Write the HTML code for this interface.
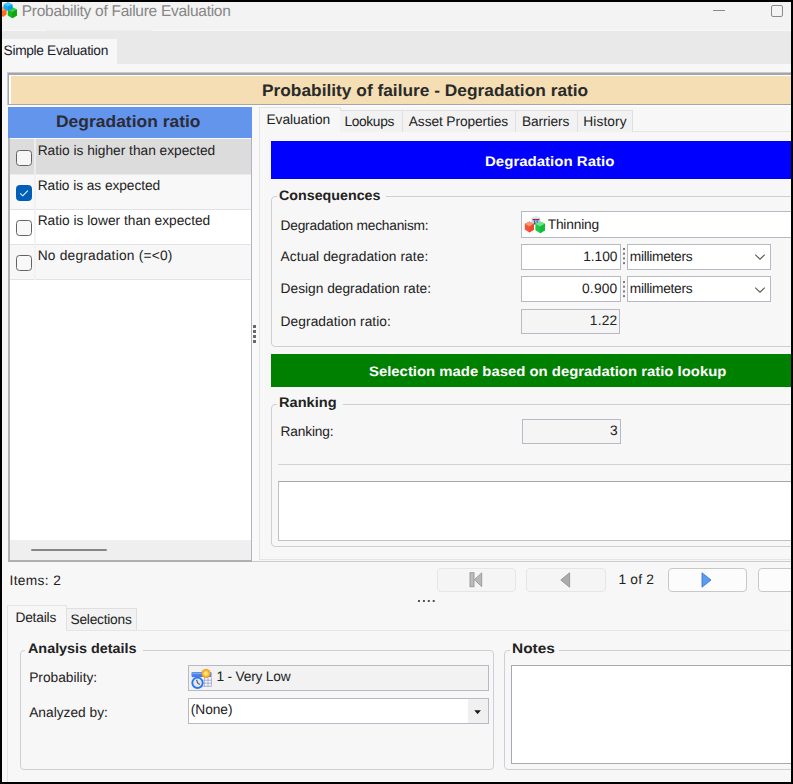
<!DOCTYPE html>
<html>
<head>
<meta charset="utf-8">
<title>Probability of Failure Evaluation</title>
<style>
html,body{margin:0;padding:0;}
body{width:793px;height:784px;background:#000;overflow:hidden;position:relative;font-family:"Liberation Sans",sans-serif;font-size:13.75px;color:#222;text-rendering:geometricPrecision;}
#win{position:absolute;left:2px;top:2px;width:789px;height:780px;background:#f7f7f7;overflow:hidden;}
#c{position:absolute;left:-2px;top:-2px;width:793px;height:784px;}
.a{position:absolute;}
.t{position:absolute;white-space:nowrap;line-height:20px;height:20px;transform-origin:0 50%;}
.box{position:absolute;box-sizing:border-box;border:1px solid #b9b9c3;background:#fff;}
.ro{background:#f5f5f5;}
.grp{position:absolute;box-sizing:border-box;border:1px solid #ccd0d6;border-radius:4px;}
.gl{position:absolute;background:#f7f7f7;height:4px;}
.tab{position:absolute;box-sizing:border-box;border:1px solid #e0e0e0;border-bottom:none;background:#f2f2f2;}
.tabsel{background:#f7f7f7;border-color:#e4e4e4;}
.btn{position:absolute;box-sizing:border-box;border:1px solid #e6e6e6;border-radius:4px;background:#f5f5f5;}
.cb{position:absolute;width:16px;height:16px;box-sizing:border-box;border:1px solid #626262;border-radius:3.5px;background:#f8f8f8;}
</style>
</head>
<body>
<div id="win"><div id="c">

<!-- title bar -->
<div class="a" style="left:2px;top:2px;width:789px;height:28px;background:#f3f3f3;"></div>
<svg class="a" style="left:2px;top:2px;" width="18" height="18" viewBox="2 2 18 18">
  <path d="M3 6.6 L6.6 8.6 L6.6 14.6 L3 16.9 L-1 14.6 L-1 8.6 Z" fill="#ff6a1a"/>
  <path d="M3 6.6 L6.6 8.6 L3 11 L-1 8.6 Z" fill="#ffa468"/>
  <path d="M12.3 7.2 L16.9 9.6 L16.9 15.6 L12.3 18.2 L7.8 15.6 L7.8 9.6 Z" fill="#12b81a"/>
  <path d="M12.3 7.2 L16.9 9.6 L12.3 12.2 L7.8 9.6 Z" fill="#34d63a"/>
  <path d="M12.3 12.2 L16.9 9.6 L16.9 15.6 L12.3 18.2 Z" fill="#0ea414"/>
  <path d="M8 2.3 L12.4 4.4 L12.4 8.8 L8 10.9 L3.6 8.8 L3.6 4.4 Z" fill="#10a8f8"/>
  <path d="M8 2.3 L12.4 4.4 L8 6.6 L3.6 4.4 Z" fill="#48c8ff"/>
  <path d="M8 6.6 L12.4 4.4 L12.4 8.8 L8 10.9 Z" fill="#0c98ea"/>
</svg>
<div class="a" style="left:713px;top:10px;width:12px;height:1px;background:#8a8a8a;"></div>
<div class="a" style="left:771px;top:5px;width:12px;height:12px;box-sizing:border-box;border:1px solid #8a8a8a;border-radius:2px;"></div>

<!-- ribbon band -->
<div class="a" style="left:2px;top:30.5px;width:789px;height:33.5px;background:#e9e9e9;"></div>
<div class="a" style="left:46px;top:29.5px;width:106px;height:1.5px;background:rgba(0,0,0,0.035);"></div>
<div class="a" style="left:2px;top:38.5px;width:115px;height:26px;background:#f7f7f7;"></div>

<!-- wheat header -->
<div class="a" style="left:7px;top:72px;width:800px;height:33px;box-sizing:border-box;background:#f5deb3;border-top:3px solid #a6a6aa;border-left:3px solid #a6a6aa;border-bottom:1px solid #a6a6aa;"></div>
<div class="a" style="left:7px;top:72px;width:800px;height:1px;background:#c8c8cc;"></div>
<div class="a" style="left:7px;top:72px;width:1px;height:33px;background:#c8c8cc;"></div>
<div class="a" style="left:9px;top:75px;width:800px;height:1px;background:#fff;"></div>
<div class="a" style="left:9px;top:75px;width:2px;height:29px;background:#fff;"></div>
<div class="a" style="left:8px;top:105px;width:800px;height:2px;background:#fbfbfb;"></div>

<!-- left list -->
<div class="a" style="left:7.5px;top:107px;width:244.5px;height:454px;background:#fff;border-left:2px solid #b4b4b8;border-right:1px solid #b0b4bc;box-sizing:border-box;"></div>
<div class="a" style="left:7.5px;top:138px;width:2px;height:422px;background:#b4b4b8;z-index:2;"></div>
<div class="a" style="left:8px;top:107px;width:244px;height:30.5px;background:#6495ed;"></div>
<div class="a" style="left:9px;top:137.5px;width:242px;height:1.5px;background:#fafafa;"></div>

<div class="a" style="left:9px;top:139px;width:242px;height:35px;background:#dcdcdc;"></div>
<div class="a" style="left:9px;top:174px;width:242px;height:36px;background:#f8f8f8;border-top:1px solid #ececec;border-bottom:1px solid #e2e2e2;box-sizing:border-box;"></div>
<div class="a" style="left:9px;top:210px;width:242px;height:35px;background:#fff;border-bottom:1px solid #e2e2e2;box-sizing:border-box;"></div>
<div class="a" style="left:9px;top:245px;width:242px;height:35px;background:#f7f7f7;border-bottom:1px solid #e2e2e2;box-sizing:border-box;"></div>
<div class="a" style="left:34px;top:139px;width:2px;height:141px;background:rgba(240,240,240,0.8);"></div>

<div class="cb" style="left:16px;top:150px;background:#f6f6f6;"></div>
<div class="cb" style="left:16px;top:185px;border-color:#005bb2;background:#005fb8;"></div>
<svg class="a" style="left:16px;top:185px;" width="16" height="16" viewBox="0 0 16 16"><path d="M4.2 8.4 L6.8 10.8 L11.8 5.6" fill="none" stroke="#f4f8ff" stroke-width="1.05"/></svg>
<div class="cb" style="left:16px;top:220px;"></div>
<div class="cb" style="left:16px;top:255px;"></div>

<!-- list h-scrollbar -->
<div class="a" style="left:9px;top:540px;width:242px;height:20px;background:#efefef;"></div>
<div class="a" style="left:31px;top:548.6px;width:76px;height:2.4px;background:#868686;border-radius:1px;"></div>
<div class="a" style="left:7.5px;top:559.5px;width:244.5px;height:2px;background:#b0b0b4;"></div>
<div class="a" style="left:252px;top:560.7px;width:600px;height:1.3px;background:#cbcbcf;"></div>

<!-- splitter -->
<div class="a" style="left:252px;top:107px;width:7px;height:453px;background:#f9f9f9;"></div>
<div class="a" style="left:253.2px;top:325px;width:2.6px;height:2.6px;background:#686868;box-shadow:0 5px 0 #686868,0 10px 0 #686868,0 15px 0 #686868;"></div>

<!-- right tabs -->
<div class="a" style="left:259px;top:131px;width:600px;height:429px;box-sizing:border-box;border:1px solid #e4e4e4;background:#f7f7f7;"></div>
<div class="tab tabsel" style="left:259px;top:107px;width:81.5px;height:25px;"></div>
<div class="tab" style="left:340px;top:109.5px;width:63px;height:22px;border-left:none;"></div>
<div class="tab" style="left:402px;top:109.5px;width:114px;height:22px;"></div>
<div class="tab" style="left:515px;top:109.5px;width:63px;height:22px;"></div>
<div class="tab" style="left:577px;top:109.5px;width:56px;height:22px;"></div>

<!-- blue bar -->
<div class="a" style="left:271px;top:141px;width:560px;height:37.5px;background:#0000ff;"></div>

<!-- Consequences group -->
<div class="grp" style="left:271px;top:196px;width:600px;height:151px;"></div>
<div class="gl" style="left:277px;top:194px;width:109px;"></div>

<div class="box" style="left:521px;top:211px;width:300px;height:27px;"></div>
<svg class="a" style="left:524px;top:215px;" width="22" height="19" viewBox="0 0 22 19">
  <path d="M12 0.8 L16.2 3 L16.2 8 L12 10.2 L7.6 8 L7.6 3 Z" fill="#a6e4f4"/>
  <path d="M12 0.8 L16.2 3 L12 5 L7.6 3 Z" fill="#d2f4fb"/>
  <path d="M8.6 4.6h6.8" stroke="#c81e2a" stroke-width="1.5"/>
  <path d="M10.6 5.4v4M13.2 5.4v3.4" stroke="#2a3cd8" stroke-width="1.1"/>
  <path d="M10.4 6.5l1.6 2.6" stroke="#e04040" stroke-width="0.9"/>
  <path d="M5.4 6.4 L10 8.8 L10 14.6 L5.4 17.4 L0.8 14.6 L0.8 8.8 Z" fill="#f4553a"/>
  <path d="M5.4 6.4 L10 8.8 L5.4 11.4 L0.8 8.8 Z" fill="#fa9a78"/>
  <path d="M5.4 11.4 L10 8.8 L10 14.6 L5.4 17.4 Z" fill="#f0482c"/>
  <path d="M16.2 6.4 L21 8.8 L21 15.2 L16.2 18.2 L11.4 15.2 L11.4 8.8 Z" fill="#1fc845"/>
  <path d="M16.2 6.4 L21 8.8 L16.2 11.6 L11.4 8.8 Z" fill="#6ae888"/>
  <path d="M16.2 11.6 L21 8.8 L21 15.2 L16.2 18.2 Z" fill="#18b83a"/>
</svg>

<div class="box" style="left:521px;top:244px;width:100px;height:25.5px;"></div>
<div class="box" style="left:627px;top:244px;width:144px;height:25.5px;"></div>
<svg class="a" style="left:754px;top:253px;" width="12" height="8" viewBox="0 0 12 8"><path d="M1.2 1.6 L6 6.2 L10.8 1.6" fill="none" stroke="#5a5a5a" stroke-width="1.1"/></svg>
<div class="box" style="left:521px;top:276px;width:100px;height:26px;"></div>
<div class="box" style="left:627px;top:276px;width:144px;height:26px;"></div>
<svg class="a" style="left:754px;top:285.5px;" width="12" height="8" viewBox="0 0 12 8"><path d="M1.2 1.6 L6 6.2 L10.8 1.6" fill="none" stroke="#5a5a5a" stroke-width="1.1"/></svg>
<div class="box ro" style="left:521px;top:309px;width:99px;height:24.5px;"></div>

<!-- spin dots -->
<div class="a" style="left:623px;top:248px;width:2px;height:2px;background:#7c7c7c;box-shadow:0 4.7px 0 #7c7c7c,0 9.4px 0 #7c7c7c,0 14.1px 0 #7c7c7c;"></div>
<div class="a" style="left:623px;top:280.5px;width:2px;height:2px;background:#7c7c7c;box-shadow:0 4.7px 0 #7c7c7c,0 9.4px 0 #7c7c7c,0 14.1px 0 #7c7c7c;"></div>

<!-- green bar -->
<div class="a" style="left:271px;top:353.8px;width:560px;height:33.5px;background:#008000;"></div>

<!-- Ranking group -->
<div class="grp" style="left:271px;top:404px;width:600px;height:143px;"></div>
<div class="gl" style="left:277px;top:402px;width:66px;"></div>
<div class="box ro" style="left:521.5px;top:419px;width:99.5px;height:24.5px;"></div>
<div class="a" style="left:277.8px;top:463.5px;width:560px;height:1.2px;background:#d0d2d8;"></div>
<div class="box" style="left:277.8px;top:481px;width:560px;height:60px;border-color:#c0c0c8;border-top-color:#a8a8ac;"></div>

<!-- status row -->
<div class="btn" style="left:436.5px;top:567.5px;width:79px;height:24.5px;"></div>
<div class="btn" style="left:526px;top:567.5px;width:79.5px;height:24.5px;"></div>
<div class="btn" style="left:667.5px;top:567.5px;width:79.5px;height:24.5px;background:#fcfcfc;border-color:#c8c8c8;"></div>
<div class="btn" style="left:757.5px;top:567.5px;width:79px;height:24.5px;background:#fcfcfc;border-color:#c8c8c8;"></div>
<svg class="a" style="left:469px;top:572px;" width="15" height="16" viewBox="0 0 15 16"><rect x="1" y="0.7" width="4" height="14" fill="#bcbcbc" stroke="#969696" stroke-width="0.9"/><path d="M12.7 0.9 L5.3 7.7 L12.7 14.5 Z" fill="#b8b8b8" stroke="#969696" stroke-width="0.9"/></svg>
<svg class="a" style="left:560px;top:572px;" width="11" height="16" viewBox="0 0 11 16"><path d="M9.6 0.8 L0.8 8 L9.6 15.2 Z" fill="#ababab" stroke="#8c8c8c" stroke-width="0.8"/></svg>
<svg class="a" style="left:701px;top:572px;" width="11" height="16" viewBox="0 0 11 16"><path d="M1 0.8 L10 8 L1 15.2 Z" fill="#5a9cf2" stroke="#3c78d8" stroke-width="0.9"/></svg>
<div class="a" style="left:417.6px;top:600px;width:2.4px;height:2.4px;background:#555;box-shadow:4.9px 0 0 #555,9.8px 0 0 #555,14.7px 0 0 #555;"></div>

<!-- bottom tabs -->
<div class="a" style="left:7px;top:630px;width:800px;height:160px;box-sizing:border-box;border:1px solid #e6e6e6;background:#f7f7f7;"></div>
<div class="tab tabsel" style="left:7px;top:605px;width:60px;height:26px;"></div>
<div class="tab" style="left:66px;top:608px;width:71px;height:22px;"></div>

<div class="grp" style="left:20px;top:650px;width:474px;height:119.5px;"></div>
<div class="gl" style="left:25px;top:648px;width:118px;"></div>
<div class="box ro" style="left:188px;top:665px;width:300.5px;height:25.5px;background:#f2f2f2;"></div>
<div class="box" style="left:188px;top:697.5px;width:300.5px;height:26.5px;"></div>
<div class="a" style="left:467.5px;top:698.5px;width:20px;height:24.5px;background:#f0f0f0;"></div>
<svg class="a" style="left:474px;top:709.5px;" width="7.2" height="4.5" viewBox="0 0 8 5"><path d="M0.3 0.3 L7.7 0.3 L4 4.6 Z" fill="#1a1a1a"/></svg>
<svg class="a" style="left:190.8px;top:668.5px;" width="22" height="21" viewBox="0 0 22 21">
  <defs><radialGradient id="sun"><stop offset="0" stop-color="#fff8c8"/><stop offset="0.45" stop-color="#ffd23c"/><stop offset="1" stop-color="#f58a1e"/></radialGradient></defs>
  <rect x="0.5" y="2.9" width="20" height="5.4" rx="1.2" fill="#4a7ee6"/>
  <rect x="0.8" y="3.4" width="19.4" height="1.8" rx="0.8" fill="#7aa4f2"/>
  <rect x="10.2" y="8.2" width="10.3" height="9.2" fill="#f8f9fd"/>
  <path d="M10.2 11.2h10.3M10.2 14.2h10.3M10.2 17.3h10.3M13.6 8.2v9.2M17 8.2v9.2M20.4 8.2v9.2" stroke="#9aa0c4" stroke-width="0.8" fill="none"/>
  <circle cx="6.5" cy="13.8" r="5.2" fill="#e4e6ea" stroke="#2a78ec" stroke-width="1.9"/>
  <path d="M5.6 10.8 L6.6 14 L8.8 15.6" stroke="#5a5f6a" stroke-width="1.2" fill="none"/>
  <circle cx="15" cy="4.5" r="4.5" fill="url(#sun)"/>
</svg>

<div class="grp" style="left:504px;top:650px;width:400px;height:119.5px;"></div>
<div class="gl" style="left:510px;top:648px;width:49px;"></div>
<div class="box" style="left:511px;top:665px;width:400px;height:98.5px;border-color:#a8a8b0;"></div>

<div class="t" style="left:21.8px;top:2px;font-size:15.5px;color:#868686;letter-spacing:-0.281px;">Probability of Failure Evaluation</div>
<div class="t" style="left:3.6px;top:41px;font-size:13.75px;color:#1c1c2c;letter-spacing:-0.335px;">Simple Evaluation</div>
<div class="t" style="left:262.3px;top:81px;font-size:16.6px;font-weight:bold;color:#2a2a2a;transform:scaleX(1.0436);">Probability of failure - Degradation ratio</div>
<div class="t" style="left:56.1px;top:112px;font-size:16.6px;font-weight:bold;color:#2c2c38;transform:scaleX(1.0517);">Degradation ratio</div>
<div class="t" style="left:37.7px;top:141px;font-size:13.75px;color:#222;letter-spacing:-0.019px;">Ratio is higher than expected</div>
<div class="t" style="left:37.7px;top:176px;font-size:13.75px;color:#222;letter-spacing:-0.068px;">Ratio is as expected</div>
<div class="t" style="left:37.7px;top:211px;font-size:13.75px;color:#222;letter-spacing:-0.006px;">Ratio is lower than expected</div>
<div class="t" style="left:37.7px;top:246px;font-size:13.75px;color:#222;letter-spacing:0.207px;">No degradation (=&lt;0)</div>
<div class="t" style="left:266.5px;top:110px;font-size:13.75px;color:#222;letter-spacing:-0.066px;">Evaluation</div>
<div class="t" style="left:344.4px;top:112px;font-size:13.75px;color:#222;letter-spacing:-0.334px;">Lookups</div>
<div class="t" style="left:408.8px;top:112px;font-size:13.75px;color:#222;letter-spacing:-0.108px;">Asset Properties</div>
<div class="t" style="left:522.0px;top:112px;font-size:13.75px;color:#222;letter-spacing:-0.097px;">Barriers</div>
<div class="t" style="left:583.3px;top:112px;font-size:13.75px;color:#222;letter-spacing:0.083px;">History</div>
<div class="t" style="left:485.3px;top:152px;font-size:13.75px;font-weight:bold;color:#fff;transform:scaleX(1.0924);">Degradation Ratio</div>
<div class="t" style="left:279.2px;top:186px;font-size:13.75px;font-weight:bold;color:#222;transform:scaleX(1.0373);">Consequences</div>
<div class="t" style="left:280.6px;top:216px;font-size:13.75px;color:#222;letter-spacing:-0.232px;">Degradation mechanism:</div>
<div class="t" style="left:280.6px;top:247px;font-size:13.75px;color:#222;letter-spacing:0.073px;">Actual degradation rate:</div>
<div class="t" style="left:280.6px;top:279px;font-size:13.75px;color:#222;letter-spacing:-0.010px;">Design degradation rate:</div>
<div class="t" style="left:280.6px;top:312px;font-size:13.75px;color:#222;letter-spacing:0.058px;">Degradation ratio:</div>
<div class="t" style="left:547.7px;top:215px;font-size:13.75px;color:#222;letter-spacing:-0.186px;">Thinning</div>
<div class="t" style="left:583.2px;top:247px;font-size:13.75px;color:#222;letter-spacing:-0.032px;">1.100</div>
<div class="t" style="left:629.8px;top:247px;font-size:13.75px;color:#222;letter-spacing:-0.286px;">millimeters</div>
<div class="t" style="left:582.0px;top:279px;font-size:13.75px;color:#222;letter-spacing:0.208px;">0.900</div>
<div class="t" style="left:629.8px;top:279px;font-size:13.75px;color:#222;letter-spacing:-0.286px;">millimeters</div>
<div class="t" style="left:589.8px;top:311px;font-size:13.75px;color:#222;letter-spacing:0.224px;">1.22</div>
<div class="t" style="left:368.7px;top:362px;font-size:13.75px;font-weight:bold;color:#fff;transform:scaleX(1.0827);">Selection made based on degradation ratio lookup</div>
<div class="t" style="left:279.2px;top:393px;font-size:13.75px;font-weight:bold;color:#222;transform:scaleX(1.0611);">Ranking</div>
<div class="t" style="left:280.6px;top:422px;font-size:13.75px;color:#222;letter-spacing:-0.202px;">Ranking:</div>
<div class="t" style="left:610.0px;top:421px;font-size:13.75px;color:#222;letter-spacing:0.306px;">3</div>
<div class="t" style="left:9.5px;top:571px;font-size:13.75px;color:#222;letter-spacing:0.345px;">Items: 2</div>
<div class="t" style="left:618.5px;top:570px;font-size:13.75px;color:#222;letter-spacing:0.176px;">1 of 2</div>
<div class="t" style="left:15.4px;top:608px;font-size:13.75px;color:#222;letter-spacing:-0.181px;">Details</div>
<div class="t" style="left:70.5px;top:610px;font-size:13.75px;color:#222;letter-spacing:-0.239px;">Selections</div>
<div class="t" style="left:27.8px;top:639px;font-size:13.75px;font-weight:bold;color:#222;transform:scaleX(1.0445);">Analysis details</div>
<div class="t" style="left:511.5px;top:639px;font-size:13.75px;font-weight:bold;color:#222;transform:scaleX(1.1220);">Notes</div>
<div class="t" style="left:29.2px;top:668px;font-size:13.75px;color:#222;letter-spacing:-0.006px;">Probability:</div>
<div class="t" style="left:29.2px;top:703px;font-size:13.75px;color:#222;letter-spacing:0.002px;">Analyzed by:</div>
<div class="t" style="left:216.4px;top:667px;font-size:13.75px;color:#222;letter-spacing:-0.198px;">1 - Very Low</div>
<div class="t" style="left:190.8px;top:700px;font-size:13.75px;color:#222;letter-spacing:-0.061px;">(None)</div>

</div></div>
</body>
</html>
